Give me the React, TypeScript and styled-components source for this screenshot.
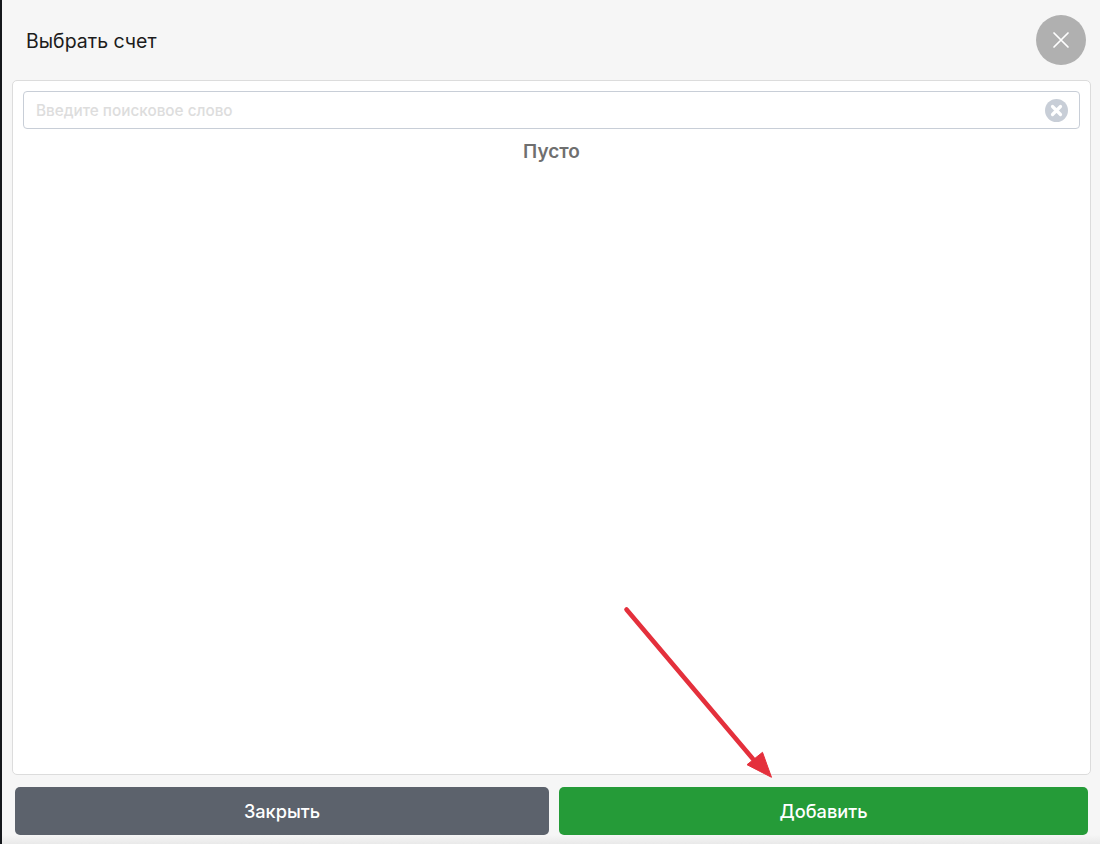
import React, { FC } from 'react'
import styled, { createGlobalStyle } from 'styled-components'

const GlobalStyle = createGlobalStyle`
  html, body {
    margin: 0;
    padding: 0;
    background: #f6f6f6;
  }
  * {
    box-sizing: border-box;
  }
`

const ClearIcon = () => (
  <svg width="23" height="23" viewBox="0 0 23 23">
    <circle cx="11.5" cy="11.5" r="11.5" fill="#c8ced7" />
    <path d="M7.5 7.5l8 8M15.5 7.5l-8 8" stroke="#fff" strokeWidth="3.2" strokeLinecap="round" />
  </svg>
)

const CloseIcon = () => (
  <svg width="18" height="18" viewBox="0 0 18 18">
    <path d="M2 2l14 14M16 2L2 16" stroke="#fff" strokeWidth="1.7" strokeLinecap="round" />
  </svg>
)

const ArrowMark = () => (
  <ArrowSvg width="160" height="184" viewBox="0 0 160 184">
    <path d="M3.500 3.500L130 153" stroke="#e4303c" strokeWidth="4.600" strokeLinecap="round" />
    <path d="M148.500 171.300L124 158.700L139.500 146.300Z" fill="#e4303c" stroke="#e4303c" strokeWidth="1" />
  </ArrowSvg>
)

const App: FC = () => {
  return (
    <Page>
      <GlobalStyle />
      <Header>
        <Title>Выбрать счет</Title>
        <CloseButton>
          <CloseIcon />
        </CloseButton>
      </Header>
      <Panel>
        <SearchBox>
          <SearchInput placeholder="Введите поисковое слово" />
          <ClearIcon />
        </SearchBox>
        <EmptyText>Пусто</EmptyText>
      </Panel>
      <Footer>
        <ActionButton $variant="close">Закрыть</ActionButton>
        <ActionButton $variant="add">Добавить</ActionButton>
      </Footer>
      <ArrowMark />
    </Page>
  )
}

const Page = styled.div`
  position: relative;
  width: 1100px;
  height: 844px;
  overflow: hidden;
  padding-left: 2px;
  display: flex;
  flex-direction: column;
  font-family: Inter, 'Liberation Sans', sans-serif;
  background: linear-gradient(#f6f6f6 835px, #e9e9e9 844px);
  border-left: 2px solid #15181c;
`

const Header = styled.div`
  height: 80px;
  display: flex;
  align-items: center;
  justify-content: space-between;
  padding: 0 14px 0 22px;
`

const Title = styled.div`
  padding-top: 2px;
  font-size: 19.5px;
  color: #1c1c1c;
`

const CloseButton = styled.div`
  width: 50px;
  height: 50px;
  border-radius: 50%;
  background: #b0b0b0;
  display: flex;
  align-items: center;
  justify-content: center;
`

const Panel = styled.div`
  height: 695px;
  margin: 0 9px 0 8px;
  padding: 10px;
  background: #fff;
  border: 1px solid #dcdcdc;
  border-radius: 5px;
`

const SearchBox = styled.div`
  height: 38px;
  display: flex;
  align-items: center;
  padding: 0 11px 0 12px;
  border: 1px solid #c8ced7;
  border-radius: 4px;
`

const SearchInput = styled.input`
  flex: 1;
  border: 0;
  outline: 0;
  padding: 0;
  font-family: inherit;
  font-size: 15.3px;
  font-weight: 500;
  &::placeholder {
    color: #dddddd;
    opacity: 1;
  }
`

const EmptyText = styled.div`
  margin-top: 12px;
  text-align: center;
  font-size: 19px;
  font-weight: 600;
  line-height: 22px;
  color: #6f6f6f;
`

const Footer = styled.div`
  display: grid;
  grid-template-columns: 534px 529px;
  gap: 10px;
  margin: 12px 0 0 11px;
`

const ActionButton = styled.div<{ $variant: 'close' | 'add' }>`
  height: 48px;
  display: flex;
  align-items: center;
  justify-content: center;
  border-radius: 5px;
  font-size: 18.2px;
  font-weight: 500;
  color: #fff;
  background: ${(p) => (p.$variant === 'add' ? '#259b38' : '#5c626c')};
`

const ArrowSvg = styled.svg`
  position: absolute;
  left: 621px;
  top: 606px;
`

export default App
